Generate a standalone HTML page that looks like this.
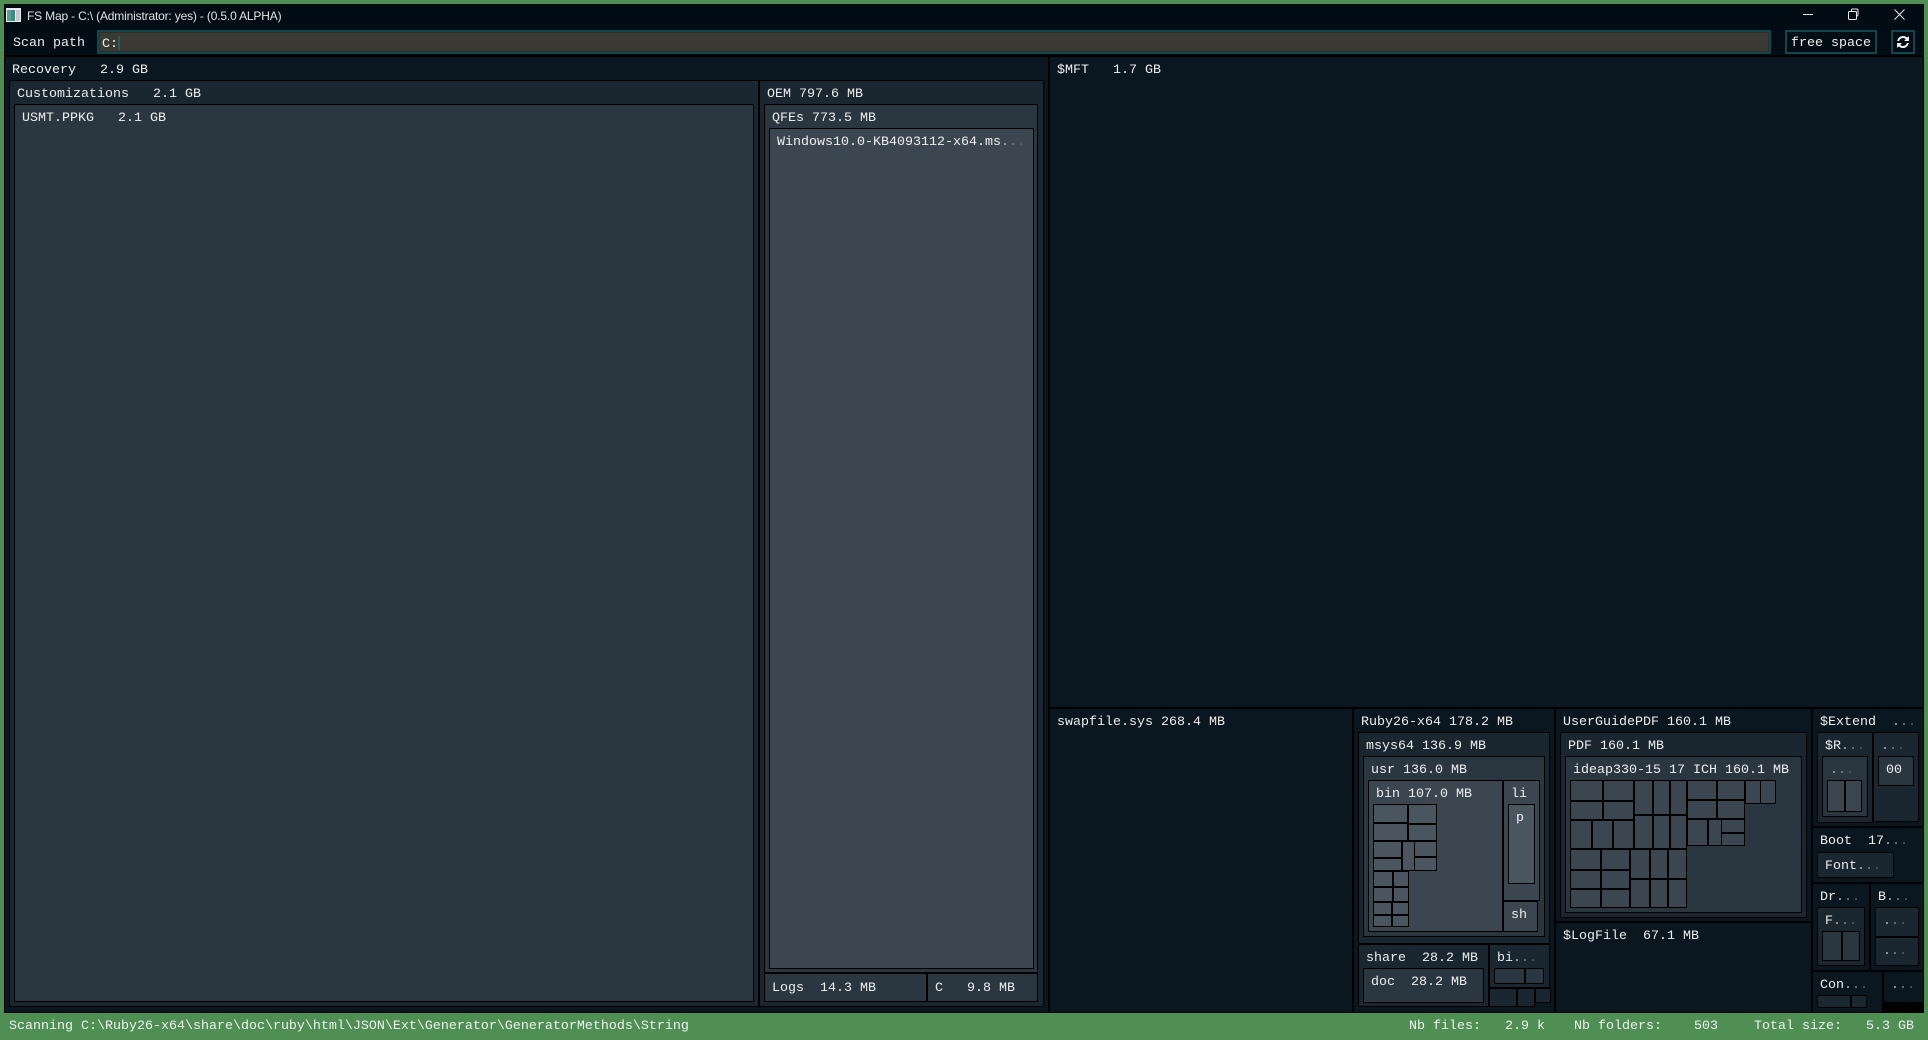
<!DOCTYPE html>
<html><head><meta charset="utf-8"><title>FS Map</title>
<style>
html,body{margin:0;padding:0;width:1928px;height:1040px;overflow:hidden;background:#4f8f54}
body{position:relative;font:13.33px/16px "Liberation Mono",monospace;color:#eeeeee}
.b{position:absolute;box-sizing:border-box;border:1px solid #000;overflow:hidden;padding:6px 7px 0;white-space:pre}
.l0{background:#0a1720}.l1{background:#1a2730}.l2{background:#2b3740}.l3{background:#3b4650}.l4{background:#4a555f}
.a{position:absolute;white-space:pre}
u{text-decoration:none}.d1{color:#b0b6ba}.d2{color:#7d868c}.d3{color:#565f66}
</style></head><body>
<div class="a" style="left:4px;top:4px;width:1920px;height:52px;background:#020c14"></div>
<div class="a" style="left:4px;top:55px;width:1920px;height:2px;background:#000"></div>
<svg class="a" style="left:6px;top:8px" width="15" height="14" viewBox="0 0 15 14"><rect width="15" height="14" fill="#e8ecec"/><rect x="1" y="2" width="8" height="11" fill="#3e8a8a"/><rect x="1" y="2" width="4" height="11" fill="#5aa08c"/><rect x="10" y="2" width="4" height="11" fill="#c4c9c9"/></svg>
<div class="a" style="left:27px;top:9px;font:12px/15px 'Liberation Sans',sans-serif;letter-spacing:-.17px;color:#dfe3e6">FS Map - C:\ (Administrator: yes) - (0.5.0 ALPHA)</div>
<svg class="a" style="left:1795px;top:2px" width="120" height="24" viewBox="0 0 120 24" fill="none" stroke="#e8e8e8" stroke-width="1"><path d="M8 12.500H18"/><rect x="53.500" y="9.500" width="8" height="8" rx="1"/><path d="M56.500 9.500V8a1 1 0 0 1 1-1H62a1 1 0 0 1 1 1v5a1 1 0 0 1-1 1h-.5"/><path d="M99.500 7.500L109.500 17.500M109.500 7.500L99.500 17.500"/></svg>

<div class="a" style="left:13px;top:36px">Scan path</div>
<div class="a" style="left:97px;top:30px;width:1674px;height:24px;box-sizing:border-box;border:2px solid #10474f;background:#3a3a33;box-shadow:inset 0 0 0 1px #2c302c;padding:4px 3px 0;line-height:16px">C:<u style="display:inline-block;width:2px;height:14px;background:#2a5a5a;vertical-align:-3px"></u></div>
<div class="a" style="left:1785px;top:30px;width:92px;height:24px;box-sizing:border-box;border:2px solid #10474f;padding:4px 4px 0;line-height:16px">free space</div>
<div class="a" style="left:1891px;top:30px;width:24px;height:24px;box-sizing:border-box;border:2px solid #10474f"></div>
<svg class="a" style="left:1896px;top:35px" width="14" height="14" viewBox="0 0 1792 1792"><path fill="#f2f2f2" d="M1639 1056q0 5-1 7-64 268-268 434.500t-478 166.500q-146 0-282.500-55t-243.500-157l-129 129q-19 19-45 19t-45-19-19-45v-448q0-26 19-45t45-19h448q26 0 45 19t19 45-19 45l-137 137q71 66 161 102t187 36q134 0 250-65t186-179q11-17 53-117 8-23 30-23h192q13 0 22.500 9.500t9.500 22.500zm25-800v448q0 26-19 45t-45 19h-448q-26 0-45-19t-19-45 19-45l138-138q-148-137-349-137-134 0-250 65t-186 179q-11 17-53 117-8 23-30 23h-199q-13 0-22.500-9.500t-9.500-22.500v-7q65-268 270-434.500t480-166.500q146 0 284 55.500t245 156.500l130-129q19-19 45-19t45 19 19 45z"/></svg>

<div class="a" style="left:4px;top:57px;width:1920px;height:956px;background:#000"></div>

<div class="b l0" style="left:4px;top:56px;width:1045px;height:957px">Recovery   2.9 GB</div>
<div class="b l1" style="left:9px;top:80px;width:750px;height:927px">Customizations   2.1 GB</div>
<div class="b l2" style="left:14px;top:104px;width:740px;height:898px">USMT.PPKG   2.1 GB</div>
<div class="b l1" style="left:759px;top:80px;width:285px;height:927px">OEM 797.6 MB</div>
<div class="b l2" style="left:764px;top:104px;width:274px;height:869px">QFEs 773.5 MB</div>
<div class="b l3" style="left:769px;top:128px;width:265px;height:841px">Windows10.0-KB4093112-x64.ms<u class="d1">.</u><u class="d2">.</u><u class="d3">.</u></div>
<div class="b l2" style="left:764px;top:973px;width:163px;height:29px;padding-top:7px">Logs  14.3 MB</div>
<div class="b l2" style="left:927px;top:973px;width:111px;height:29px;padding-top:7px">C   9.8 MB</div>

<div class="b l0" style="left:1049px;top:56px;width:875px;height:652px">$MFT   1.7 GB</div>
<div class="b l0" style="left:1049px;top:708px;width:304px;height:305px">swapfile.sys 268.4 MB</div>

<div class="b l0" style="left:1353px;top:708px;width:202px;height:305px">Ruby26-x64 178.2 MB</div>
<div class="b l1" style="left:1358px;top:732px;width:192px;height:212px">msys64 136.9 MB</div>
<div class="b l2" style="left:1363px;top:756px;width:182px;height:181px">usr 136.0 MB</div>
<div class="b l3" style="left:1368px;top:780px;width:135px;height:152px">bin 107.0 MB</div>
<div class="b l3" style="left:1503px;top:780px;width:37px;height:121px">li</div>
<div class="b l4" style="left:1508px;top:804px;width:27px;height:80px">p</div>
<div class="b l3" style="left:1503px;top:901px;width:35px;height:31px">sh</div>
<div class="b l4" style="left:1373px;top:804px;width:35px;height:19px"></div>
<div class="b l4" style="left:1408px;top:804px;width:29px;height:20px"></div>
<div class="b l4" style="left:1373px;top:823px;width:35px;height:18px"></div>
<div class="b l4" style="left:1408px;top:824px;width:29px;height:17px"></div>
<div class="b l4" style="left:1373px;top:841px;width:29px;height:17px"></div>
<div class="b l4" style="left:1402px;top:841px;width:12px;height:30px"></div>
<div class="b l4" style="left:1414px;top:841px;width:23px;height:16px"></div>
<div class="b l4" style="left:1373px;top:858px;width:29px;height:13px"></div>
<div class="b l4" style="left:1414px;top:857px;width:23px;height:14px"></div>
<div class="b l4" style="left:1373px;top:871px;width:20px;height:16px"></div>
<div class="b l4" style="left:1393px;top:871px;width:16px;height:16px"></div>
<div class="b l4" style="left:1373px;top:887px;width:20px;height:15px"></div>
<div class="b l4" style="left:1393px;top:887px;width:16px;height:15px"></div>
<div class="b l4" style="left:1373px;top:902px;width:19px;height:13px"></div>
<div class="b l4" style="left:1392px;top:902px;width:17px;height:13px"></div>
<div class="b l4" style="left:1373px;top:915px;width:19px;height:12px"></div>
<div class="b l4" style="left:1392px;top:915px;width:17px;height:12px"></div>

<div class="b l1" style="left:1358px;top:944px;width:131px;height:63px">share  28.2 MB</div>
<div class="b l2" style="left:1363px;top:968px;width:121px;height:35px">doc  28.2 MB</div>
<div class="b l1" style="left:1489px;top:944px;width:61px;height:44px">bi<u class="d1">.</u><u class="d2">.</u><u class="d3">.</u></div>
<div class="b l2" style="left:1494px;top:968px;width:31px;height:16px"></div>
<div class="b l2" style="left:1525px;top:968px;width:19px;height:16px"></div>
<div class="b l1" style="left:1489px;top:988px;width:28px;height:19px"></div>
<div class="b l1" style="left:1517px;top:988px;width:18px;height:19px"></div>
<div class="b l1" style="left:1535px;top:988px;width:15px;height:15px"></div>

<div class="b l0" style="left:1555px;top:708px;width:257px;height:214px">UserGuidePDF 160.1 MB</div>
<div class="b l1" style="left:1560px;top:732px;width:247px;height:186px">PDF 160.1 MB</div>
<div class="b l2" style="left:1565px;top:756px;width:237px;height:157px">ideap330-15 17 ICH 160.1 MB</div>
<div class="b l3" style="left:1570px;top:780px;width:33px;height:21px"></div>
<div class="b l3" style="left:1603px;top:780px;width:31px;height:21px"></div>
<div class="b l3" style="left:1570px;top:801px;width:33px;height:19px"></div>
<div class="b l3" style="left:1603px;top:801px;width:31px;height:19px"></div>
<div class="b l3" style="left:1570px;top:820px;width:22px;height:29px"></div>
<div class="b l3" style="left:1592px;top:820px;width:21px;height:29px"></div>
<div class="b l3" style="left:1613px;top:820px;width:21px;height:29px"></div>
<div class="b l3" style="left:1634px;top:780px;width:19px;height:35px"></div>
<div class="b l3" style="left:1653px;top:780px;width:17px;height:35px"></div>
<div class="b l3" style="left:1670px;top:780px;width:17px;height:35px"></div>
<div class="b l3" style="left:1634px;top:815px;width:19px;height:34px"></div>
<div class="b l3" style="left:1653px;top:815px;width:17px;height:34px"></div>
<div class="b l3" style="left:1670px;top:815px;width:17px;height:34px"></div>
<div class="b l3" style="left:1687px;top:780px;width:30px;height:20px"></div>
<div class="b l3" style="left:1717px;top:780px;width:28px;height:20px"></div>
<div class="b l3" style="left:1687px;top:800px;width:30px;height:19px"></div>
<div class="b l3" style="left:1717px;top:800px;width:28px;height:19px"></div>
<div class="b l3" style="left:1687px;top:819px;width:21px;height:27px"></div>
<div class="b l3" style="left:1708px;top:819px;width:13px;height:27px"></div>
<div class="b l3" style="left:1721px;top:819px;width:24px;height:14px"></div>
<div class="b l3" style="left:1721px;top:833px;width:24px;height:13px"></div>
<div class="b l3" style="left:1745px;top:780px;width:15px;height:24px"></div>
<div class="b l3" style="left:1760px;top:780px;width:13px;height:24px"></div>
<div class="b l3" style="left:1570px;top:849px;width:31px;height:21px"></div>
<div class="b l3" style="left:1601px;top:849px;width:29px;height:21px"></div>
<div class="b l3" style="left:1570px;top:870px;width:31px;height:19px"></div>
<div class="b l3" style="left:1601px;top:870px;width:29px;height:19px"></div>
<div class="b l3" style="left:1570px;top:889px;width:31px;height:19px"></div>
<div class="b l3" style="left:1601px;top:889px;width:29px;height:19px"></div>
<div class="b l3" style="left:1630px;top:849px;width:20px;height:30px"></div>
<div class="b l3" style="left:1650px;top:849px;width:18px;height:30px"></div>
<div class="b l3" style="left:1668px;top:849px;width:19px;height:30px"></div>
<div class="b l3" style="left:1630px;top:879px;width:20px;height:29px"></div>
<div class="b l3" style="left:1650px;top:879px;width:18px;height:29px"></div>
<div class="b l3" style="left:1668px;top:879px;width:19px;height:29px"></div>
<div class="b l0" style="left:1555px;top:922px;width:257px;height:91px">$LogFile  67.1 MB</div>

<div class="b l0" style="left:1812px;top:708px;width:112px;height:119px">$Extend  <u class="d1">.</u><u class="d2">.</u><u class="d3">.</u></div>
<div class="b l1" style="left:1817px;top:732px;width:56px;height:91px">$R<u class="d1">.</u><u class="d2">.</u><u class="d3">.</u></div>
<div class="b l2" style="left:1822px;top:756px;width:46px;height:61px"><u class="d1">.</u><u class="d2">.</u><u class="d3">.</u></div>
<div class="b l3" style="left:1827px;top:780px;width:18px;height:32px"></div>
<div class="b l3" style="left:1845px;top:780px;width:17px;height:32px"></div>
<div class="b l1" style="left:1873px;top:732px;width:46px;height:90px"><u class="d1">.</u><u class="d2">.</u><u class="d3">.</u></div>
<div class="b l2" style="left:1878px;top:756px;width:36px;height:30px">00</div>
<div class="b l0" style="left:1812px;top:827px;width:112px;height:56px">Boot  17<u class="d1">.</u><u class="d2">.</u><u class="d3">.</u></div>
<div class="b l1" style="left:1817px;top:852px;width:77px;height:26px">Font<u class="d1">.</u><u class="d2">.</u><u class="d3">.</u></div>
<div class="b l0" style="left:1812px;top:883px;width:58px;height:88px">Dr<u class="d1">.</u><u class="d2">.</u><u class="d3">.</u></div>
<div class="b l1" style="left:1817px;top:907px;width:48px;height:59px">F<u class="d1">.</u><u class="d2">.</u><u class="d3">.</u></div>
<div class="b l2" style="left:1822px;top:931px;width:20px;height:30px"></div>
<div class="b l2" style="left:1842px;top:931px;width:18px;height:30px"></div>
<div class="b l0" style="left:1870px;top:883px;width:54px;height:88px">B<u class="d1">.</u><u class="d2">.</u><u class="d3">.</u></div>
<div class="b l1" style="left:1875px;top:907px;width:44px;height:30px"><u class="d1">.</u><u class="d2">.</u><u class="d3">.</u></div>
<div class="b l1" style="left:1875px;top:937px;width:44px;height:29px"><u class="d1">.</u><u class="d2">.</u><u class="d3">.</u></div>
<div class="b l0" style="left:1812px;top:971px;width:71px;height:42px">Con<u class="d1">.</u><u class="d2">.</u><u class="d3">.</u></div>
<div class="b l1" style="left:1817px;top:995px;width:34px;height:13px"></div>
<div class="b l1" style="left:1851px;top:995px;width:16px;height:13px"></div>
<div class="b l0" style="left:1883px;top:971px;width:41px;height:32px"><u class="d1">.</u><u class="d2">.</u><u class="d3">.</u></div>

<div class="a" style="left:9px;top:1019px;color:#f0f0f0">Scanning C:\Ruby26-x64\share\doc\ruby\html\JSON\Ext\Generator\GeneratorMethods\String</div>
<div class="a" style="left:1409px;top:1019px;color:#f0f0f0">Nb files:</div>
<div class="a" style="left:1505px;top:1019px;color:#f0f0f0">2.9 k</div>
<div class="a" style="left:1574px;top:1019px;color:#f0f0f0">Nb folders:</div>
<div class="a" style="left:1694px;top:1019px;color:#f0f0f0">503</div>
<div class="a" style="left:1754px;top:1019px;color:#f0f0f0">Total size:</div>
<div class="a" style="left:1866px;top:1019px;color:#f0f0f0">5.3 GB</div>
</body></html>
